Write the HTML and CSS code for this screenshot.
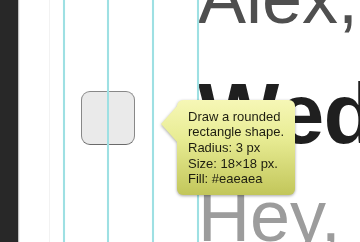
FILE: index.html
```html
<!DOCTYPE html>
<html>
<head>
<meta charset="utf-8">
<link rel="stylesheet" href="styles.css">
</head>
<body>
<div class="screen">
  <div class="sidebar"></div>
  <div class="canvas">
    <div class="lines">
      <div class="line line-alex">Alex,</div>
      <div class="line line-wed">Wednesday</div>
      <div class="line line-hey">Hey,</div>
    </div>
    <div class="shape"></div>
    <div class="guide guide-faint g0"></div>
    <div class="guide g1"></div>
    <div class="guide g2"></div>
    <div class="guide g3"></div>
    <div class="guide g4"></div>
    <div class="tip">
      <p>Draw a rounded<br>rectangle shape.<br>Radius: 3 px<br>Size: 18×18 px.<br>Fill: #eaeaea</p>
    </div>
  </div>
</div>
</body>
</html>
```
FILE: styles.css
```css
html, body {
  margin: 0;
  padding: 0;
  background: #ffffff;
}
.screen {
  position: relative;
  width: 360px;
  height: 242px;
  overflow: hidden;
  display: flex;
  background: #ffffff;
  font-family: "Liberation Sans", Arial, sans-serif;
}
.sidebar {
  width: 18px;
  flex: none;
  background: #282828;
  box-shadow: 1px 0 1px rgba(0,0,0,0.25);
  position: relative;
  z-index: 2;
}
.canvas {
  flex: 1;
  position: relative;
}
.lines {
  display: flex;
  flex-direction: column;
  margin-left: 180px;
  margin-top: -38px;
  white-space: nowrap;
}
.line {
  font-size: 72px;
  line-height: 72px;
}
.line-alex {
  color: #4f4f4f;
}
.line-wed {
  font-size: 86px;
  line-height: 86px;
  font-weight: bold;
  color: #1f1f1f;
  margin-top: 36px;
  letter-spacing: -1px;
}
.line-hey {
  color: #9c9c9c;
  margin-top: 24px;
}
.shape {
  position: absolute;
  left: 63px;
  top: 91px;
  width: 54px;
  height: 54px;
  box-sizing: border-box;
  border: 1.5px solid #888888;
  border-bottom-color: #6a6a6a;
  border-radius: 9px;
  background: #eaeaea;
}
.guide {
  position: absolute;
  top: 0;
  bottom: 0;
  width: 2px;
  background: #9ee0e3;
  box-shadow: 0 0 1px #d0f1f2;
  z-index: 1;
}
.guide-faint {
  width: 1px;
  background: #f2f2f2;
  box-shadow: none;
}
.g0 { left: 31px; }
.g1 { left: 45px; }
.g2 { left: 89px; }
.g3 { left: 134px; }
.g4 { left: 179px; }
.tip {
  position: absolute;
  left: 159px;
  top: 100px;
  width: 118px;
  height: 95px;
  box-sizing: border-box;
  padding: 8.6px 0 0 11px;
  border-radius: 6px;
  background: linear-gradient(#f6f7b6, #e8ec94 40%, #c2c65a);
  filter: drop-shadow(0 1px 1.5px rgba(0,0,0,0.35));
  z-index: 3;
}
.tip::before {
  content: "";
  position: absolute;
  left: -16px;
  top: 0;
  width: 17px;
  height: 100%;
  background: linear-gradient(#f6f7b6, #e8ec94 40%, #c2c65a);
  clip-path: polygon(100% 5px, 0 24px, 100% 43px);
}
.tip p {
  margin: 0;
  position: relative;
  font-size: 13px;
  line-height: 15.7px;
  color: #1d1d10;
}
```
